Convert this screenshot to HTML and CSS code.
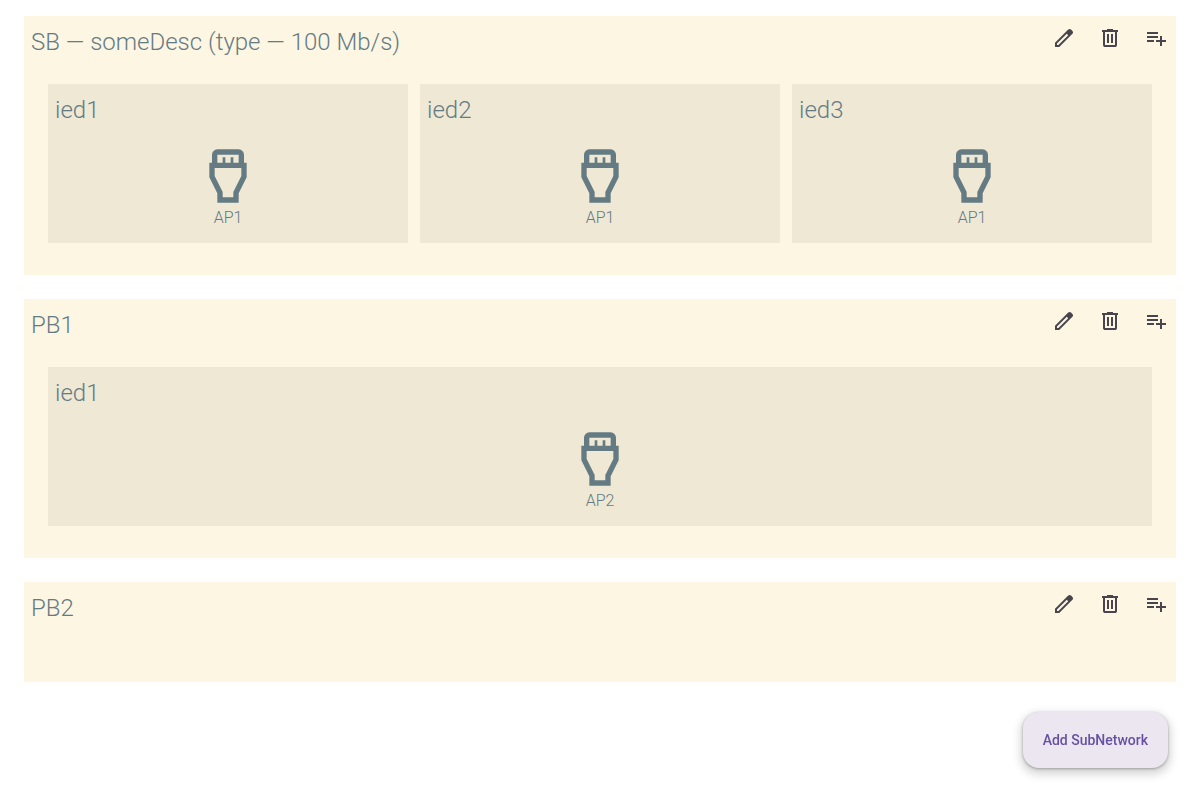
FILE: index.html
```html
<!DOCTYPE html>
<html lang="en">
<head>
<meta charset="utf-8">
<title>Subnetworks</title>
<link rel="stylesheet" href="styles.css">
</head>
<body>
<svg class="sprite" aria-hidden="true">
  <symbol id="edit" viewBox="0 -960 960 960"><path d="M200-200h57l391-391-57-57-391 391v57Zm-80 80v-170l528-527q12-11 26.500-17t30.500-6q16 0 31 6t26 18l55 56q12 11 17.500 26t5.500 30q0 16-5.500 30.500T817-647L290-120H120Zm640-584-56-56 56 56Zm-141 85-28-29 57 57-29-28Z"/></symbol>
  <symbol id="delete" viewBox="0 -960 960 960"><path d="M280-120q-33 0-56.500-23.500T200-200v-520h-40v-80h200v-40h240v40h200v80h-40v520q0 33-23.500 56.500T680-120H280Zm400-600H280v520h400v-520ZM360-280h80v-360h-80v360Zm160 0h80v-360h-80v360ZM280-720v520-520Z"/></symbol>
  <symbol id="playlist-add" viewBox="0 -960 960 960"><path d="M120-320v-80h280v80H120Zm0-160v-80h440v80H120Zm0-160v-80h440v80H120Zm520 480v-160H480v-80h160v-160h80v160h160v80H720v160h-80Z"/></symbol>
  <symbol id="hdmi" viewBox="0 -960 960 960"><path fill-rule="evenodd" d="M320-80v-140L200-460v-220h40v-120q0-33 23.500-56.500T320-880h320q33 0 56.500 23.500T720-800v120h40v220L640-220v140H320Zm0-600h80v-80h40v80h80v-80h40v80h80v-120H320v120Zm80 520h160v-79l120-240v-121H280v121l120 240v79Z"/></symbol>
</svg>
<main class="networks">
  <section class="network">
    <header class="network-head">
      <h1 class="title">SB — someDesc (type — 100 Mb/s)</h1>
      <nav class="actions">
        <button class="icon-button" aria-label="Edit"><svg class="icon"><use href="#edit"/></svg></button>
        <button class="icon-button" aria-label="Delete"><svg class="icon"><use href="#delete"/></svg></button>
        <button class="icon-button" aria-label="Add access point"><svg class="icon"><use href="#playlist-add"/></svg></button>
      </nav>
    </header>
    <div class="ieds">
      <section class="ied"><h2 class="title">ied1</h2><figure class="port"><svg class="port-icon"><use href="#hdmi"/></svg><figcaption>AP1</figcaption></figure></section>
      <section class="ied"><h2 class="title">ied2</h2><figure class="port"><svg class="port-icon"><use href="#hdmi"/></svg><figcaption>AP1</figcaption></figure></section>
      <section class="ied"><h2 class="title">ied3</h2><figure class="port"><svg class="port-icon"><use href="#hdmi"/></svg><figcaption>AP1</figcaption></figure></section>
    </div>
  </section>
  <section class="network">
    <header class="network-head">
      <h1 class="title">PB1</h1>
      <nav class="actions">
        <button class="icon-button" aria-label="Edit"><svg class="icon"><use href="#edit"/></svg></button>
        <button class="icon-button" aria-label="Delete"><svg class="icon"><use href="#delete"/></svg></button>
        <button class="icon-button" aria-label="Add access point"><svg class="icon"><use href="#playlist-add"/></svg></button>
      </nav>
    </header>
    <div class="ieds">
      <section class="ied"><h2 class="title">ied1</h2><figure class="port"><svg class="port-icon"><use href="#hdmi"/></svg><figcaption>AP2</figcaption></figure></section>
    </div>
  </section>
  <section class="network">
    <header class="network-head">
      <h1 class="title">PB2</h1>
      <nav class="actions">
        <button class="icon-button" aria-label="Edit"><svg class="icon"><use href="#edit"/></svg></button>
        <button class="icon-button" aria-label="Delete"><svg class="icon"><use href="#delete"/></svg></button>
        <button class="icon-button" aria-label="Add access point"><svg class="icon"><use href="#playlist-add"/></svg></button>
      </nav>
    </header>
    <div class="ieds"></div>
  </section>
</main>
<button class="fab">Add SubNetwork</button>
</body>
</html>
```
FILE: styles.css
```css
* {
  box-sizing: border-box;
}

body {
  margin: 0;
  background: #fff;
  color: #657b83;
  font-family: Roboto, sans-serif;
}

.sprite {
  display: none;
}

.networks {
  display: flex;
  flex-direction: column;
  gap: 24px;
  padding: 16px 24px;
}

.network {
  background: #fdf6e3;
}

.network-head {
  display: flex;
  align-items: flex-start;
  justify-content: space-between;
}

.title {
  margin: 0;
  padding: 4px 7px 0;
  font-size: 24px;
  font-weight: 300;
  line-height: 44px;
  white-space: nowrap;
  overflow: hidden;
  text-overflow: ellipsis;
}

.actions {
  display: flex;
  gap: 6px;
  padding-top: 2px;
}

.icon-button {
  display: grid;
  place-items: center;
  width: 40px;
  height: 40px;
  padding: 0;
  border: 0;
  border-radius: 50%;
  background: none;
  color: #49454f;
  cursor: pointer;
}

.icon {
  width: 24px;
  height: 24px;
  fill: currentColor;
}

.ieds {
  display: grid;
  grid-auto-flow: column;
  grid-auto-columns: minmax(0, 1fr);
  gap: 12px;
  padding: 20px 24px 32px;
}

.ied {
  padding-bottom: 15px;
  background: #eee8d5;
}

.port {
  display: flex;
  flex-direction: column;
  align-items: center;
  margin: 0;
  padding-top: 12px;
  font-size: 16px;
  font-weight: 300;
  line-height: 20px;
}

.port-icon {
  width: 64px;
  height: 64px;
  fill: currentColor;
}

.fab {
  position: fixed;
  right: 32px;
  bottom: 32px;
  height: 56px;
  padding: 0 20px;
  border: 0;
  border-radius: 16px;
  background: #ece6f0;
  box-shadow: 0 1px 3px rgba(0, 0, 0, 0.3), 0 4px 8px 3px rgba(0, 0, 0, 0.15);
  color: #6750a4;
  font: 500 14px/20px Roboto, sans-serif;
  cursor: pointer;
}
```
